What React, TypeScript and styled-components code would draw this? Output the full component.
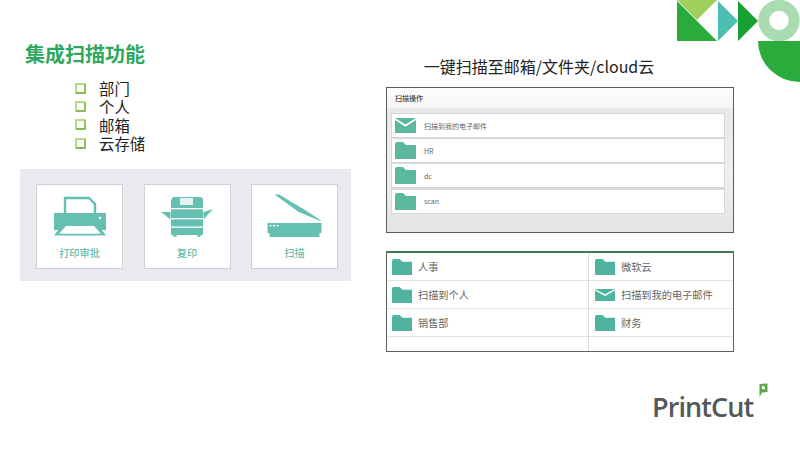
import React from "react";
import styled, { createGlobalStyle } from "styled-components";

const Global = createGlobalStyle`
  html, body { margin: 0; padding: 0; background: #fff; }
  body { font-family: "Noto Sans CJK SC", "Noto Sans", sans-serif; }
`;

const Page = styled.div`
  position: relative;
  width: 800px;
  height: 450px;
  overflow: hidden;
  background: #fff;
  display: grid;
  grid-template-columns: 331px 348px;
  column-gap: 35px;
  padding-left: 20px;
  box-sizing: border-box;
`;

const LeftColumn = styled.section`
  display: flex;
  flex-direction: column;
  padding-top: 41px;
`;

const Title = styled.h1`
  margin: 0 0 0 5px;
  font-size: 20px;
  line-height: 26px;
  font-weight: 700;
  color: #2fa85f;
`;

const BulletList = styled.ul`
  list-style: none;
  margin: 12px 0 0 55px;
  padding: 0;
  display: flex;
  flex-direction: column;
  height: 90px;
`;

const BulletItem = styled.li`
  display: flex;
  align-items: center;
  gap: 13px;
  height: 18.4px;
  font-size: 15.4px;
  line-height: 18.4px;
  color: #222;
`;

const Check = styled.span`
  display: block;
  width: 11px;
  height: 11px;
  box-sizing: border-box;
  border: 2px solid #b4d98a;
  border-right-color: #8fc15a;
  border-bottom-color: #86b953;
  border-radius: 1.5px;
  background: #fafdf7;
`;

const FeaturePanel = styled.div`
  height: 112px;
  box-sizing: border-box;
  background: #e8eaf0;
  padding: 15px 13px 12px 16px;
  display: flex;
  gap: 20.5px;
`;

const FeatureCard = styled.div`
  width: 87px;
  height: 85px;
  box-sizing: border-box;
  background: #fff;
  border: 1px solid #cfd1d6;
  display: flex;
  flex-direction: column;
  align-items: center;
`;

const IconSlot = styled.div`
  height: 52px;
  width: 100%;
  display: flex;
  align-items: flex-end;
  justify-content: center;
`;

const FeatureLabel = styled.span`
  margin-top: 8px;
  font-size: 10.2px;
  line-height: 16px;
  font-weight: 500;
  color: #66bcae;
`;

const RightColumn = styled.section`
  display: flex;
  flex-direction: column;
  padding-top: 55px;
`;

const Heading = styled.h2`
  margin: 0;
  height: 32px;
  text-align: center;
  font-size: 16px;
  line-height: 22px;
  font-weight: 400;
  color: #222;
  padding-right: 42px;
`;

const ScanPanel = styled.div`
  height: 146px;
  box-sizing: border-box;
  border: 1px solid #5a5a5a;
  display: flex;
  flex-direction: column;
  background: linear-gradient(180deg, #e6e6e6 0%, #efefef 60%, #e4e4e4 100%);
`;

const ScanHeader = styled.div`
  height: 20px;
  padding-left: 8px;
  background: linear-gradient(180deg, #fdfdfd, #f5f5f5);
  font-size: 7px;
  line-height: 20px;
  font-weight: 500;
  color: #444;
  flex: none;
`;

const ScanRows = styled.div`
  margin: 5px 8px 0 4px;
  padding: 1px;
  background: #d8d8d8;
  display: flex;
  flex-direction: column;
  gap: 2.2px;
`;

const ScanRow = styled.div`
  height: 23px;
  background: #fff;
  display: flex;
  align-items: center;
  gap: 8px;
  padding-left: 3px;
  font-size: 7px;
  color: #666;
`;

const TablePanel = styled.div`
  margin-top: 18px;
  height: 101px;
  box-sizing: border-box;
  border: 1px solid #5f5f5f;
  border-top: 2px solid #3f7f4f;
  display: grid;
  grid-template-columns: 201px 1fr;
  grid-template-rows: 28px 28px 28px 1fr;
`;

const TableCell = styled.div<{ $right?: boolean; $last?: boolean }>`
  display: flex;
  align-items: center;
  gap: 6px;
  padding-left: ${(p) => (p.$right ? "6px" : "5px")};
  border-left: ${(p) => (p.$right ? "1px solid #dcdcdc" : "none")};
  border-bottom: ${(p) => (p.$last ? "none" : "1px solid #e2e2e2")};
  font-size: 10.2px;
  color: #666;
`;

const Decor = styled.svg`
  position: absolute;
  top: 0;
  right: 0;
`;

const BrandLogo = styled.div`
  position: absolute;
  left: 652px;
  top: 382px;
  width: 120px;
  height: 42px;
`;

const BrandName = styled.span`
  position: absolute;
  left: 0;
  bottom: 0;
  font-family: "Open Sans", sans-serif;
  font-size: 27px;
  line-height: 34px;
  font-weight: 600;
  letter-spacing: -0.9px;
  color: #53585a;
`;

const BrandFlag = styled.svg`
  position: absolute;
  left: 106px;
  top: 1px;
`;

const TEAL = "#66c0b2";
const ROW = "#5bb89c";

const Printer = () => (
  <svg width="54" height="41" viewBox="0 0 54 41">
    <path d="M12 17V2h24l6 6v9" fill="#fff" stroke={TEAL} strokeWidth="2.4" />
    <rect x="1" y="17" width="52" height="17" fill={TEAL} />
    <polygon points="9,29 45,29 53,39.5 1,39.5" fill={TEAL} />
    <polygon points="13,30 41,30 48,37.8 6,37.8" fill="#fff" />
    <circle cx="47" cy="22" r="1.2" fill="#fff" />
  </svg>
);

const Copier = () => (
  <svg width="56" height="41" viewBox="0 0 56 41">
    <path d="M12 4l2-3h28l2 2v36H12z" fill={TEAL} />
    <rect x="21" y="2" width="13" height="7" fill="#e2f4f0" />
    <polygon points="2,16 11.5,16 11.5,23.5" fill={TEAL} />
    <polygon points="44.5,16 54,13 44.5,23.5" fill={TEAL} />
    <rect x="12" y="12" width="32" height="1.3" fill="#fff" />
    <rect x="12" y="22" width="32" height="1.3" fill="#fff" />
    <rect x="12" y="30.5" width="32" height="1.3" fill="#fff" />
    <circle cx="16" cy="39" r="2" fill={TEAL} />
    <circle cx="40" cy="39" r="2" fill={TEAL} />
  </svg>
);

const Scanner = () => (
  <svg width="56" height="45" viewBox="0 0 56 45">
    <polygon points="7.5,2.5 12,2.5 38,18 54.5,28.7 52,28.5 31.8,20" fill={TEAL} />
    <rect x="0.5" y="31" width="54" height="10" fill={TEAL} />
    <rect x="2.5" y="41" width="50" height="4" fill={TEAL} />
    <rect x="2.5" y="33" width="2" height="1.4" fill="#fff" />
    <rect x="6" y="33" width="2" height="1.4" fill="#fff" />
    <rect x="9.5" y="33" width="2" height="1.4" fill="#fff" />
  </svg>
);

const Folder = ({ w, h, color }: { w: number; h: number; color: string }) => (
  <svg width={w} height={h} viewBox="0 0 21 17" preserveAspectRatio="none">
    <path d="M0 17V2l1-2h7l3 3h10v14z" fill={color} />
  </svg>
);

const Mail = ({ w, h, color }: { w: number; h: number; color: string }) => (
  <svg width={w} height={h} viewBox="0 0 21 15" preserveAspectRatio="none">
    <path d="M0 0h21L10.5 6.5z" fill={color} />
    <path d="M0 2l10.5 6.8L21 2V15H0z" fill={color} />
  </svg>
);

const scanRows = [
  { mail: true, text: "扫描到我的电子邮件" },
  { mail: false, text: "HR" },
  { mail: false, text: "dc" },
  { mail: false, text: "scan" },
];

const tableCells = [
  { mail: false, text: "人事" },
  { mail: false, text: "微软云" },
  { mail: false, text: "扫描到个人" },
  { mail: true, text: "扫描到我的电子邮件" },
  { mail: false, text: "销售部" },
  { mail: false, text: "财务" },
];

export default function App() {
  return (
    <Page>
      <Global />
      <LeftColumn>
        <Title>集成扫描功能</Title>
        <BulletList>
          {["部门", "个人", "邮箱", "云存储"].map((t) => (
            <BulletItem key={t}>
              <Check />
              {t}
            </BulletItem>
          ))}
        </BulletList>
        <FeaturePanel>
          <FeatureCard>
            <IconSlot><Printer /></IconSlot>
            <FeatureLabel>打印审批</FeatureLabel>
          </FeatureCard>
          <FeatureCard>
            <IconSlot><Copier /></IconSlot>
            <FeatureLabel>复印</FeatureLabel>
          </FeatureCard>
          <FeatureCard>
            <IconSlot><Scanner /></IconSlot>
            <FeatureLabel>扫描</FeatureLabel>
          </FeatureCard>
        </FeaturePanel>
      </LeftColumn>

      <RightColumn>
        <Heading>一键扫描至邮箱/文件夹/cloud云</Heading>
        <ScanPanel>
          <ScanHeader>扫描操作</ScanHeader>
          <ScanRows>
            {scanRows.map((r) => (
              <ScanRow key={r.text}>
                {r.mail ? <Mail w={21} h={15} color={ROW} /> : <Folder w={21} h={17} color={ROW} />}
                {r.text}
              </ScanRow>
            ))}
          </ScanRows>
        </ScanPanel>
        <TablePanel>
          {tableCells.map((c, i) => (
            <TableCell key={c.text} $right={i % 2 === 1}>
              {c.mail ? <Mail w={20} h={12} color="#4fb3a0" /> : <Folder w={20} h={16} color="#4fb3a0" />}
              {c.text}
            </TableCell>
          ))}
          <TableCell $last />
          <TableCell $last $right />
        </TablePanel>
      </RightColumn>

      <Decor width="124" height="83" viewBox="676 0 124 83">
        <defs>
          <pattern id="hatch" width="2" height="2" patternUnits="userSpaceOnUse" patternTransform="rotate(45)">
            <rect width="2" height="2" fill="#0f9a2c" />
            <rect width="2" height="0.7" fill="#2aab3b" />
          </pattern>
        </defs>
        <polygon points="677,1 717,41 677,41" fill="#2aab3b" />
        <polygon points="677,0 717,0 697,20" fill="#a1cf5b" />
        <polygon points="718,1 738,21 718,41" fill="#4cbfb1" />
        <polygon points="738,1 758,21 738,41" fill="url(#hatch)" />
        <circle cx="779" cy="20.5" r="15.2" fill="none" stroke="#a9dcb1" strokeWidth="11" />
        <path d="M758 41h42v41a42 41 0 0 1-42-41z" fill="#2aab3b" />
      </Decor>

      <BrandLogo>
        <BrandName>PrintCut</BrandName>
        <BrandFlag width="10" height="15" viewBox="0 0 10 15">
          <path d="M1.5 1l8-.5v8.5l-5.5.5L1.5 14z" fill="#5aa845" />
          <rect x="3.8" y="3.2" width="3" height="3" fill="#fff" />
        </BrandFlag>
      </BrandLogo>
    </Page>
  );
}
